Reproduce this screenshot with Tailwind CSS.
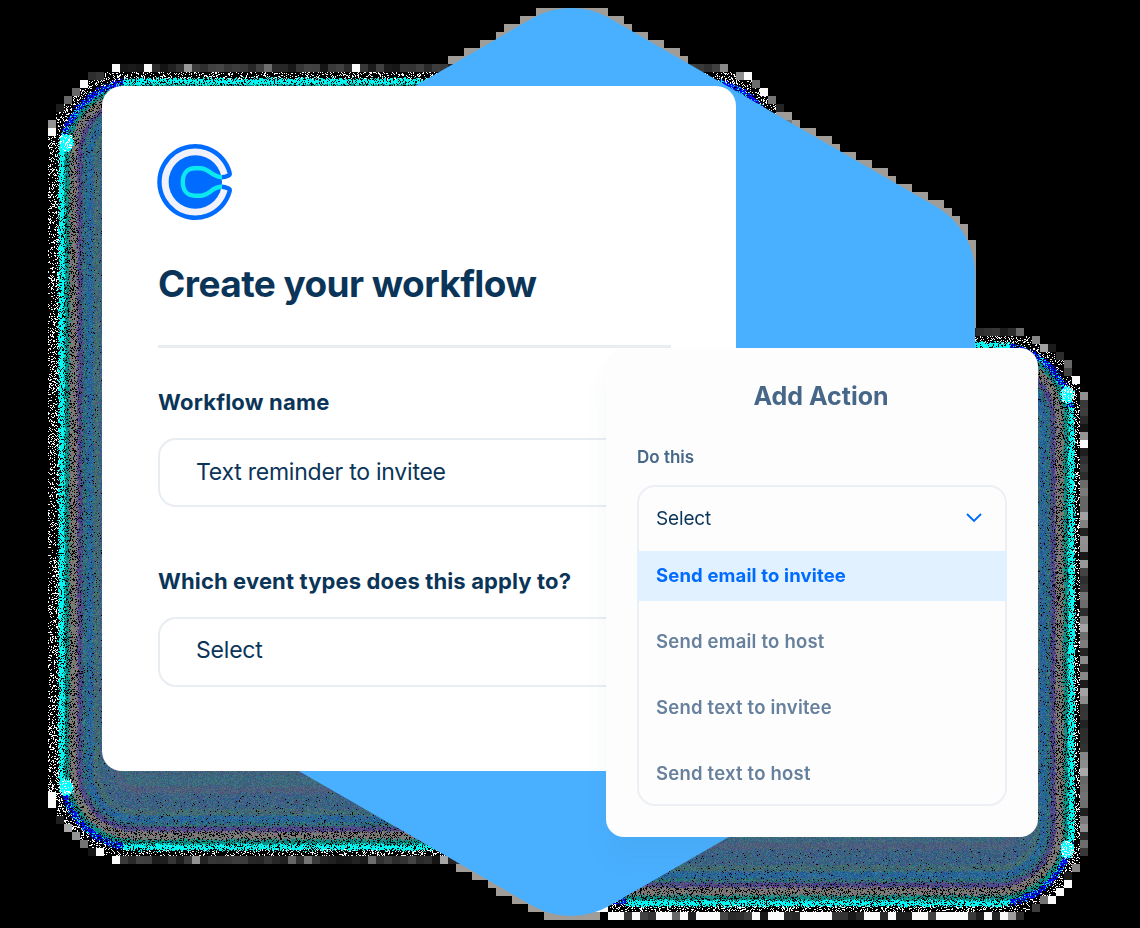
<!DOCTYPE html>
<html lang="en">
<head>
<meta charset="utf-8">
<title>Create your workflow</title>
<script src="https://cdn.jsdelivr.net/npm/@tailwindcss/browser@4"></script>
</head>
<body class="bg-black">
<main class="relative h-[928px] w-[1140px] overflow-hidden bg-black font-['Inter',sans-serif] text-[#0b3558]">
  <canvas id="grain" width="1140" height="928" class="absolute inset-0"></canvas>
  <svg class="absolute inset-0" width="1140" height="928" viewBox="0 0 1140 928" fill="#49b0ff">
    <path d="M532 18.5A78 78 0 0 1 610 18.5L936 206.5A78 78 0 0 1 975 274V650A78 78 0 0 1 936 717.5L610 905.5A78 78 0 0 1 532 905.5L206 717.5A78 78 0 0 1 167 650V274A78 78 0 0 1 206 206.5Z"/>
  </svg>

  <section class="absolute left-[102px] top-[86px] flex h-[685px] w-[634px] flex-col rounded-[20px] bg-white pl-14 pr-[65px] pt-[54px]">
    <svg class="-ml-1 shrink-0" width="82" height="84" viewBox="154 140 82 84" fill="none">
      <path d="M222 177.200C224.500 177.200 226.500 176.400 228.500 175.500Q230.200 174.600 229.600 172.600A35.700 35.700 0 1 0 229.600 191.400Q230.200 189.400 228.500 188.500C226.500 187.600 224.500 186.800 222 186.800" fill="#f1f2f9" stroke="#006bff" stroke-width="4.400"/>
      <circle cx="195.300" cy="182" r="26.700" fill="#006bff"/>
      <path d="M222 177.200C211 177.200 210 168.300 200 168.300H195C186.500 168.300 182.800 174.500 182.800 182S186.500 195.700 195 195.700H200C210 195.700 211 186.800 222 186.800" stroke="#0ae8f0" stroke-width="4.400"/>
    </svg>
    <h1 class="mt-9 h-12 whitespace-nowrap text-[37px] font-bold leading-[48px] tracking-[-0.570px]">Create your workflow</h1>
    <hr class="mt-[37px] border-t-[3px] border-[#e8edf2]">
    <h2 class="mt-[39px] h-[30px] whitespace-nowrap text-[22px] font-bold leading-[30px] tracking-[0.220px]">Workflow name</h2>
    <div class="mt-[21px] flex h-[69px] items-center rounded-[18px] border-[2.500px] border-[#e8edf2] pl-9 text-[23px] tracking-[-0.240px]">Text reminder to invitee</div>
    <h2 class="mt-[59px] h-[30px] whitespace-nowrap text-[22px] font-bold leading-[30px] tracking-[0.130px]">Which event types does this apply to?</h2>
    <div class="mt-[21px] flex h-[70px] items-center rounded-[18px] border-[2.500px] border-[#e8edf2] pb-[3px] pl-9 text-[23px] tracking-[-0.200px]">Select</div>
  </section>

  <section class="absolute left-[606px] top-[348px] flex h-[489px] w-[432px] flex-col rounded-[18px] bg-[#fdfdfe] px-[31px] pt-8 text-[#476788] shadow-[0_24px_24px_rgba(71,103,136,0.06)]">
    <h2 class="h-8 pr-[2px] text-center text-[25px] font-bold leading-8">Add Action</h2>
    <h3 class="mt-[33px] h-6 text-[17px] font-semibold leading-6">Do this</h3>
    <div class="mt-4 flex h-[321px] flex-col rounded-[18px] border-[2.500px] border-[#ecf0f4] text-[18.500px] font-semibold tracking-[0.220px] text-[#67809c]">
      <div class="flex h-16 shrink-0 items-center justify-between pl-[17px] pr-[22px] text-[19px] font-normal tracking-[-0.150px] text-[#0b3558]">
        Select
        <svg class="mb-[3px]" width="18" height="12" viewBox="0 0 18 12" fill="none" stroke="#006bff" stroke-width="1.900"><path d="M2 2L9 9L16 2"/></svg>
      </div>
      <div class="-mx-[2px] flex h-[50px] shrink-0 items-center bg-[#e2f1ff] pl-[19px] font-bold tracking-[0.140px] text-[#006bff]">Send email to invitee</div>
      <div class="mt-2 flex h-[66px] shrink-0 items-center pl-[17px]">Send email to host</div>
      <div class="flex h-[66px] shrink-0 items-center pl-[17px]">Send text to invitee</div>
      <div class="flex h-[66px] shrink-0 items-center pl-[17px]">Send text to host</div>
    </div>
  </section>
</main>
<script>
const W = 1140, H = 928;
const ctx = document.getElementById('grain').getContext('2d');
const img = ctx.createImageData(W, H);
let seed = 7;
const rnd = () => ((seed = (seed * 1664525 + 1013904223) >>> 0) / 4294967296);
// distance inward from a rounded box edge; second value marks the corner zones
function depth(x, y, b) {
  const r = 86, cx = (b[0] + b[2]) / 2, cy = (b[1] + b[3]) / 2;
  const qx = Math.abs(x - cx) - (b[2] - b[0]) / 2 + r, qy = Math.abs(y - cy) - (b[3] - b[1]) / 2 + r;
  return [r - Math.hypot(Math.max(qx, 0), Math.max(qy, 0)) - Math.min(Math.max(qx, qy), 0), qx > 12 && qy > 12];
}
const boxes = [[49, 69, 790, 859], [552, 333, 1083, 915]];
function best(x, y) {
  const a = depth(x, y, boxes[0]), b = depth(x, y, boxes[1]);
  return a[0] > b[0] ? a : b;
}
// from depth: colour, share of black pixels, spread
const bands = [[4, [0, 0, 0], 0, 0], [9, [0, 245, 240], .2, 15], [15, [10, 140, 132], .25, 25], [20, [122, 120, 118], .25, 20],
  [28, [78, 72, 135], .12, 28], [33, [48, 108, 120], .06, 28], [37, [42, 102, 150], .04, 25], [44, [66, 106, 115], .03, 25],
  [50, [60, 98, 130], .02, 24], [66, [76, 95, 124], 0, 20], [73, [62, 104, 126], 0, 20], [84, [65, 98, 124], 0, 18]];
const spots = [[66, 142], [66, 787], [1067, 394], [1067, 849]];
const hex = (x, y) => {
  const dx = Math.abs(x - 571), dy = Math.abs(y - 462);
  if (dx > 404 || dy > 454) return false;
  if (dx < 39) return Math.hypot(dx, dy - 376) < 78 || dy < 376;
  if (dx > 365 && dy > 188) return Math.hypot(dx - 326, dy - 188) < 78;
  return dy < 466 - dx * .5774;
};
for (let by = 0; by < H; by += 8) for (let bx = 0; bx < W; bx += 8) {
  const d0 = best(bx + 4, by + 4)[0], c0 = best(bx + 4, by + 4)[1];
  let touch = false;
  for (let j = 0; j < 8; j++) for (let i = 0; i < 8; i++) touch = touch || hex(bx + i, by + j);
  const bright = by > 900 ? .4 : c0 ? .3 : .02;
  const tone = rnd() < bright ? 250 : rnd() < (bx > 1000 || c0 ? .5 : .08) ? 100 + rnd() * 70 : 20 + rnd() * 50;
  for (let j = 0; j < 8; j++) for (let i = 0; i < 8; i++) {
    const x = bx + i, y = by + j;
    if (x >= W || y >= H) continue;
    let c = [0, 0, 0];
    if (d0 > 1) {
      const [d, corner] = best(x, y);
      const p = bands.findLast(b => d + (rnd() - .5) * 3 >= b[0]) || bands[0];
      if (spots.some(s => Math.hypot(x - s[0], (y - s[1]) * .8) < 6 + rnd() * 2)) c = rnd() < .3 ? [255, 255, 255] : [0, 255, 255];
      else if (p === bands[0]) { if (rnd() < .22) c = [255, 255, 255]; }
      else if (rnd() >= p[2]) {
        const base = corner && p === bands[1] ? (rnd() < .75 ? [10, 10, 245] : [0, 230, 230]) : p[1];
        c = base.map(v => v + (rnd() - .5) * 2 * p[3]);
      }
    } else if (d0 > -5) c = [tone, tone, tone];
    else if (touch) c = [160, 156, 152];
    const k = (y * W + x) * 4;
    img.data[k] = c[0]; img.data[k + 1] = c[1]; img.data[k + 2] = c[2]; img.data[k + 3] = 255;
  }
}
ctx.putImageData(img, 0, 0);
</script>
</body>
</html>
